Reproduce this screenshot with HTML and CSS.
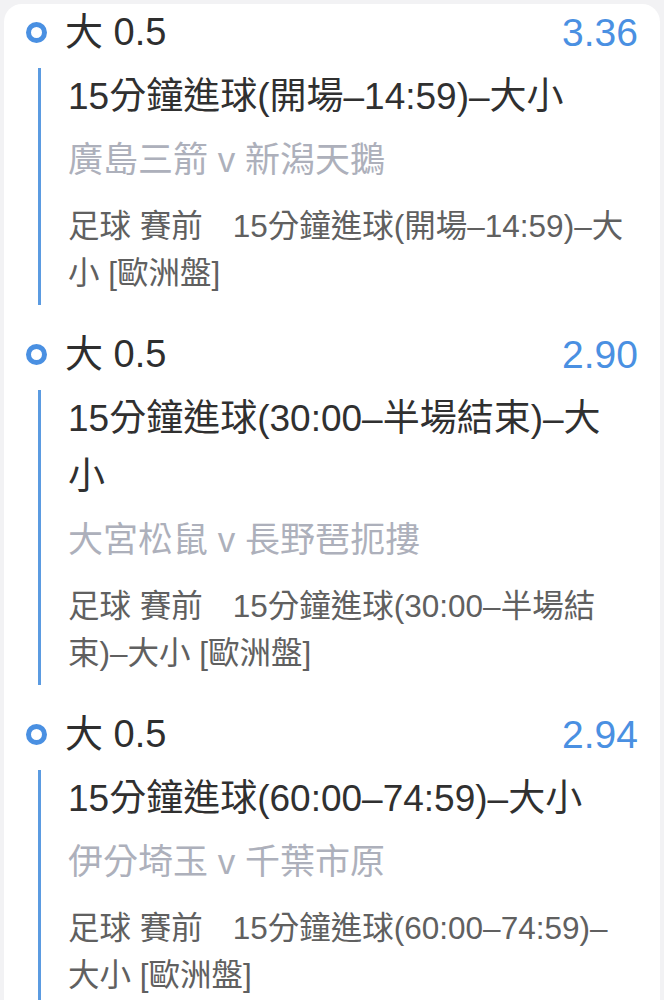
FILE: index.html
```html
<!DOCTYPE html>
<html lang="zh-Hant">
<head>
  <meta charset="UTF-8">
  <title>投注記錄</title>
  <link rel="stylesheet" href="styles.css">
</head>
<body>
  <div class="card">
    <div class="bet">
      <div class="bet-head">
        <span class="dot"></span>
        <span class="pick">大 0.5</span>
        <span class="odds">3.36</span>
      </div>
      <div class="bet-body">
        <div class="market">15分鐘進球(開場–14:59)–大小</div>
        <div class="teams">廣島三箭 v 新潟天鵝</div>
        <div class="meta"><span class="sport">足球 賽前</span>15分鐘進球(開場–14:59)–大小 [歐洲盤]</div>
      </div>
    </div>

    <div class="bet">
      <div class="bet-head">
        <span class="dot"></span>
        <span class="pick">大 0.5</span>
        <span class="odds">2.90</span>
      </div>
      <div class="bet-body">
        <div class="market">15分鐘進球(30:00–半場結束)–大小</div>
        <div class="teams">大宮松鼠 v 長野琶扼摟</div>
        <div class="meta"><span class="sport">足球 賽前</span>15分鐘進球(30:00–半場結束)–大小 [歐洲盤]</div>
      </div>
    </div>

    <div class="bet">
      <div class="bet-head">
        <span class="dot"></span>
        <span class="pick">大 0.5</span>
        <span class="odds">2.94</span>
      </div>
      <div class="bet-body">
        <div class="market">15分鐘進球(60:00–74:59)–大小</div>
        <div class="teams">伊分埼玉 v 千葉市原</div>
        <div class="meta"><span class="sport">足球 賽前</span>15分鐘進球(60:00–74:59)–大小 [歐洲盤]</div>
      </div>
    </div>
  </div>
</body>
</html>
```

FILE: styles.css
```css
body {
  margin: 0;
  background-color: #f2f2f4;
  font-family: "Liberation Sans", "Noto Sans CJK TC", sans-serif;
}
.card {
  background-color: #fff;
  margin: 4px 4px 0;
  padding: 0 22px 40px 0;
  border-radius: 18px 18px 0 0;
}
.bet + .bet {
  margin-top: 21px;
}
.bet-head {
  display: flex;
  align-items: center;
  height: 56px;
  padding-left: 22px;
}
.dot {
  flex: none;
  width: 21px;
  height: 21px;
  box-sizing: border-box;
  border: 5px solid #4a90e2;
  border-radius: 50%;
  margin-right: 18px;
}
.pick {
  font-size: 38px;
  line-height: 1;
  color: #2e2e2e;
}
.odds {
  margin-left: auto;
  font-size: 39px;
  line-height: 1;
  color: #4a90e2;
}
.bet-body {
  margin: 8px 13px 0 34px;
  padding: 0 0 8px 27px;
  border-left: 3px solid #5b9be1;
}
.market {
  font-size: 37px;
  line-height: 58px;
  color: #303030;
}
.teams {
  font-size: 35px;
  line-height: 68px;
  color: #adb0bb;
}
.meta {
  margin-top: 9px;
  font-size: 31.5px;
  line-height: 47px;
  color: #606060;
}
.sport {
  margin-right: 30px;
}
```
